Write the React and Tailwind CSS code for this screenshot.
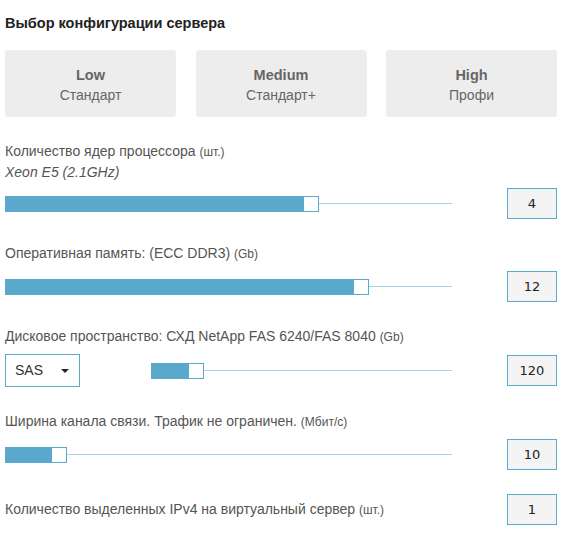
import React from 'react'

const FONT = "font-['Liberation_Sans',sans-serif]"

function PlanCard({ title, sub }) {
  return (
    <div className="w-[171px] h-[67px] rounded-[3px] bg-[#ededed] flex flex-col items-center justify-center pt-[3px] text-[#666]">
      <div className="text-[14.5px] font-bold leading-[20px]">{title}</div>
      <div className="text-[14px] leading-[20px]">{sub}</div>
    </div>
  )
}

function Slider({ width, fill }) {
  return (
    <div className="flex items-center h-4" style={{ width }}>
      <div className="h-4 bg-[#5aa8cc]" style={{ width: fill }} />
      <div className="w-4 h-4 bg-white border border-[#5aa8cc]" />
      <div className="flex-1 h-px bg-[#a8d3e6]" />
    </div>
  )
}

function ValueBox({ value }) {
  return (
    <div className="ml-auto w-[50px] h-[31px] bg-[#f4f4f4] border border-[#5aa8cc] flex items-center justify-center text-[13px] text-[#222] font-['DejaVu_Sans',sans-serif]">
      {value}
    </div>
  )
}

function Label({ children, unit }) {
  return (
    <div className="text-[14px] leading-[20px] text-[#555]">
      {children} <span className="text-[12px]">{unit}</span>
    </div>
  )
}

export default function App() {
  return (
    <div className={`${FONT} w-[570px] h-[547px] bg-white pl-[5px] pr-[13px] pt-[13px] flex flex-col`}>
      <h1 className="text-[14.5px] font-bold leading-[20px] text-[#222]">Выбор конфигурации сервера</h1>

      <div className="mt-[17px] flex gap-[19.5px]">
        <PlanCard title="Low" sub="Стандарт" />
        <PlanCard title="Medium" sub="Стандарт+" />
        <PlanCard title="High" sub="Профи" />
      </div>

      <div className="mt-[24px]">
        <Label unit="(шт.)">Количество ядер процессора</Label>
        <div className="text-[14px] leading-[20px] italic text-[#555]">Xeon E5 (2.1GHz)</div>
      </div>
      <div className="mt-[6px] flex items-center">
        <Slider width={447} fill={298} />
        <ValueBox value="4" />
      </div>

      <div className="mt-[24px]">
        <Label unit="(Gb)">Оперативная память: (ECC DDR3)</Label>
      </div>
      <div className="mt-[7px] flex items-center">
        <Slider width={447} fill={348} />
        <ValueBox value="12" />
      </div>

      <div className="mt-[24px]">
        <Label unit="(Gb)">Дисковое пространство: СХД NetApp FAS 6240/FAS 8040</Label>
      </div>
      <div className="mt-[7px] flex items-center">
        <div className="w-[75px] h-[33px] border border-[#5aa8cc] bg-white flex items-center justify-between pl-[9px] pr-[10px] text-[14px] text-[#333]">
          <span>SAS</span>
          <span className="w-0 h-0 border-x-[4px] border-x-transparent border-t-[4px] border-t-[#222]" />
        </div>
        <div className="ml-[71px]">
          <Slider width={301} fill={37} />
        </div>
        <ValueBox value="120" />
      </div>

      <div className="mt-[24px]">
        <Label unit="(Мбит/с)">Ширина канала связи. Трафик не ограничен.</Label>
      </div>
      <div className="mt-[7px] flex items-center">
        <Slider width={447} fill={46} />
        <ValueBox value="10" />
      </div>

      <div className="mt-[24px] flex items-center">
        <Label unit="(шт.)">Количество выделенных IPv4 на виртуальный сервер</Label>
        <ValueBox value="1" />
      </div>
    </div>
  )
}
